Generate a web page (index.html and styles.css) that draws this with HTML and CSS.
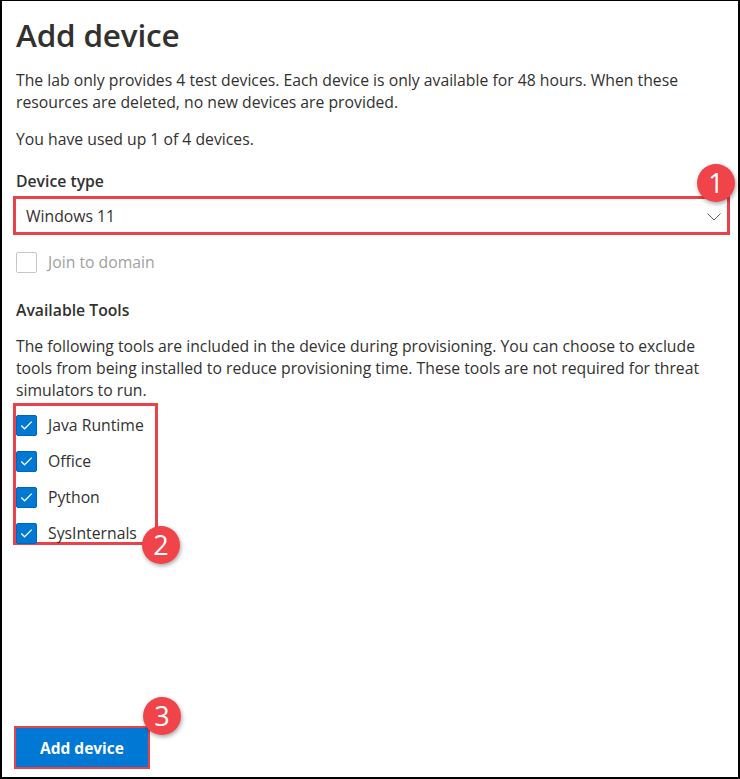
FILE: index.html
```html
<!DOCTYPE html>
<html lang="en">
<head>
<meta charset="utf-8">
<title>Add device</title>
<link rel="stylesheet" href="styles.css">
</head>
<body>
<div class="frame">
  <h1 class="title">Add device</h1>
  <p class="text intro">The lab only provides 4 test devices. Each device is only available for 48 hours. When these resources are deleted, no new devices are provided.</p>
  <p class="text used">You have used up 1 of 4 devices.</p>

  <div class="label">Device type</div>
  <div class="dropdown annot">
    <span class="dd-value">Windows 11</span>
    <svg class="chev" width="14" height="8" viewBox="0 0 14 8"><path d="M0.5 0.5 L7 7 L13.5 0.5" fill="none" stroke="#605e5c" stroke-width="1"/></svg>
    <span class="badge badge-1">1</span>
  </div>

  <label class="check disabled">
    <span class="box"></span>
    <span class="check-text">Join to domain</span>
  </label>

  <div class="label tools-label">Available Tools</div>
  <p class="text tools-text">The following tools are included in the device during provisioning. You can choose to exclude tools from being installed to reduce provisioning time. These tools are not required for threat simulators to run.</p>

  <div class="tool-list annot">
    <label class="check on">
      <span class="box"><svg width="20" height="20" viewBox="0 0 20 20"><path d="M4.5 10.5 L8 14 L15.5 6.5" fill="none" stroke="#fff" stroke-width="1.3"/></svg></span>
      <span class="check-text">Java Runtime</span>
    </label>
    <label class="check on">
      <span class="box"><svg width="20" height="20" viewBox="0 0 20 20"><path d="M4.5 10.5 L8 14 L15.5 6.5" fill="none" stroke="#fff" stroke-width="1.3"/></svg></span>
      <span class="check-text">Office</span>
    </label>
    <label class="check on">
      <span class="box"><svg width="20" height="20" viewBox="0 0 20 20"><path d="M4.5 10.5 L8 14 L15.5 6.5" fill="none" stroke="#fff" stroke-width="1.3"/></svg></span>
      <span class="check-text">Python</span>
    </label>
    <label class="check on">
      <span class="box"><svg width="20" height="20" viewBox="0 0 20 20"><path d="M4.5 10.5 L8 14 L15.5 6.5" fill="none" stroke="#fff" stroke-width="1.3"/></svg></span>
      <span class="check-text">SysInternals</span>
    </label>
    <span class="badge badge-2">2</span>
  </div>

  <div class="footer">
    <button class="primary annot">Add device<span class="badge badge-3">3</span></button>
  </div>
</div>
</body>
</html>
```

FILE: styles.css
```css
html, body {
  margin: 0;
  padding: 0;
  background: #fff;
}

.frame {
  box-sizing: border-box;
  width: 740px;
  height: 779px;
  border-top: 1px solid #000;
  border-left: 2px solid #000;
  border-right: 2px solid #000;
  border-bottom: 2px solid #000;
  padding: 0 8px 8px 14px;
  display: flex;
  flex-direction: column;
  font-family: "Segoe UI", "Open Sans", "Noto Sans", sans-serif;
  color: #323130;
}

.title {
  margin: 14px 0 0 0;
  font-size: 31.5px;
  line-height: 40px;
  font-weight: 600;
  letter-spacing: -0.2px;
  color: #323130;
}

.text {
  margin: 0;
  max-width: 712px;
  font-size: 15.75px;
  line-height: 22px;
}

.intro {
  margin-top: 14px;
}

.used {
  margin-top: 15px;
}

.label {
  margin-top: 20px;
  font-size: 15.75px;
  line-height: 22px;
  font-weight: 600;
}

.annot {
  border: 3px solid #e8434a;
  position: relative;
}

.dropdown {
  margin: 4px 0 0 -3px;
  height: 39px;
  box-sizing: border-box;
  display: flex;
  align-items: center;
  padding: 0 6px 0 10px;
}

.dd-value {
  flex: 1;
  font-size: 15.75px;
}

.chev {
  margin-top: 2px;
}

.badge {
  position: absolute;
  width: 38px;
  height: 38px;
  border-radius: 50%;
  background: #f1434a;
  color: #fff;
  font-family: "Open Sans", "Noto Sans", sans-serif;
  font-size: 27px;
  font-weight: 400;
  line-height: 38px;
  text-align: center;
  box-shadow: 1px 2px 4px rgba(0, 0, 0, 0.35);
}

.badge-1 {
  right: -8px;
  top: -35px;
}

.check {
  display: flex;
  align-items: center;
  height: 36px;
  font-size: 15.75px;
}

.check .box {
  box-sizing: border-box;
  flex: none;
  width: 21px;
  height: 21px;
  border-radius: 2px;
  display: flex;
  align-items: center;
  justify-content: center;
  margin-right: 11px;
}

.check.disabled {
  margin-top: 9px;
  color: #a19f9d;
}

.check.disabled .box {
  border: 1px solid #c8c6c4;
}

.check.on .box {
  background: #0078d4;
  border: 1px solid #0067b8;
}

.tools-label {
  margin-top: 19px;
}

.tools-text {
  margin-top: 14px;
}

.tool-list {
  align-self: flex-start;
  margin: 2px 0 0 -3px;
  padding: 1px 0 0 0;
  width: 145px;
  height: 142px;
  box-sizing: border-box;
}

.badge-2 {
  left: 126px;
  top: 120px;
}

.footer {
  margin-top: auto;
}

.primary {
  margin-left: -2px;
  border-width: 2px;
  width: 136px;
  height: 43px;
  background: #0078d4;
  color: #fff;
  font-family: "Segoe UI", "Open Sans", "Noto Sans", sans-serif;
  font-size: 15.5px;
  font-weight: 700;
  padding: 0;
  cursor: pointer;
}

.badge-3 {
  left: 127px;
  top: -31px;
}
```
